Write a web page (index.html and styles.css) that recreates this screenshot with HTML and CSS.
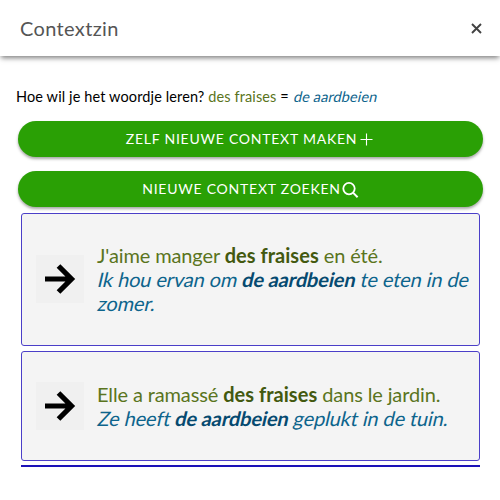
FILE: index.html
```html
<!DOCTYPE html>
<html lang="nl">
<head>
<meta charset="utf-8">
<title>Contextzin</title>
<link rel="stylesheet" href="styles.css">
</head>
<body>
<header class="toolbar">
  <h1 class="title">Contextzin</h1>
  <button class="close" aria-label="Sluiten"><svg width="11" height="11" viewBox="0 0 11 11"><path d="M1 1l9 9M10 1l-9 9"/></svg></button>
</header>
<main class="content">
  <p class="question">Hoe wil je het woordje leren? <span class="fr">des fraises</span> = <span class="nl">de aardbeien</span></p>
  <button class="action">ZELF NIEUWE CONTEXT MAKEN<svg width="18" height="18" viewBox="0 0 18 18"><path d="M9.5 3.5v12M3.5 9.5h12" stroke-width="1.1"/></svg></button>
  <button class="action">NIEUWE CONTEXT ZOEKEN<svg width="18" height="18" viewBox="0 0 18 18"><circle cx="8" cy="8.6" r="5.7" stroke-width="1.8"/><path d="M12 12.6l4.6 4.6" stroke-width="2"/></svg></button>
  <section class="cards">
    <article class="card tall">
      <span class="arrow"><svg width="32" height="32" viewBox="0 0 32 32"><path d="M1 16h27M14.5 3l13 13-13 13"/></svg></span>
      <div class="text"><div class="fr">J'aime manger <b>des fraises</b> en été.</div><div class="nl">Ik hou ervan om <b>de aardbeien</b> te eten in de</div><div class="nl">zomer.</div></div>
    </article>
    <article class="card">
      <span class="arrow"><svg width="32" height="32" viewBox="0 0 32 32"><path d="M1 16h27M14.5 3l13 13-13 13"/></svg></span>
      <div class="text"><div class="fr">Elle a ramassé <b>des fraises</b> dans le jardin.</div><div class="nl">Ze heeft <b>de aardbeien</b> geplukt in de tuin.</div></div>
    </article>
  </section>
</main>
</body>
</html>
```
FILE: styles.css
```css
* { box-sizing: border-box; }
body { margin: 0; height: 500px; overflow: hidden; background: #fff; color: #000; font-family: Lato, sans-serif; }
svg { fill: none; stroke: currentColor; flex: none; }
button { border: 0; padding: 0; font-family: inherit; }
.toolbar { height: 56px; display: flex; align-items: center; justify-content: space-between; padding: 0 18px 0 20px; box-shadow: 0 3px 5px -1px rgba(0,0,0,.5); }
.title { margin: 0; font: 400 20px/24px Lato, sans-serif; letter-spacing: .35px; color: #555; }
.close { display: flex; background: none; color: #424242; }
.close svg { stroke-width: 1.9; }
.content { padding: 31px 17px 0 18px; }
.question { margin: 0 0 14px -2px; font-size: 14.5px; line-height: 20px; letter-spacing: .12px; white-space: nowrap; }
.fr { color: #5a7420; }
.nl { display: inline-block; color: #0d648c; transform: skewX(-13deg); transform-origin: 0 75%; }
.fr b { color: #43590f; }
.nl b { color: #064a70; }
.action { display: flex; align-items: center; justify-content: center; width: 100%; height: 36px; margin-bottom: 14px; padding-bottom: 1px; border-radius: 18px; background: #2aa005; color: #fff; font-size: 14px; letter-spacing: .76px; box-shadow: 0 2px 3px rgba(0,0,0,.35); }
.cards { margin: -8px 3px 0; border-bottom: 2px solid #1c12b8; padding-bottom: 4px; }
.card { display: flex; align-items: center; height: 110px; padding-left: 14px; border: 1px solid #4b3fc8; border-radius: 3px; background: #f4f4f4; }
.card.tall { height: 133px; margin-bottom: 5px; padding-bottom: 1px; }
.arrow { display: flex; align-items: center; justify-content: center; width: 48px; height: 48px; margin-right: 13px; flex: none; background: #f0f0f0; color: #000; }
.arrow svg { stroke-width: 5.2; }
.text { font-size: 20px; line-height: 24px; letter-spacing: -.13px; white-space: nowrap; }
.text .fr b { letter-spacing: .04px; }
.text .nl { display: block; }
```
